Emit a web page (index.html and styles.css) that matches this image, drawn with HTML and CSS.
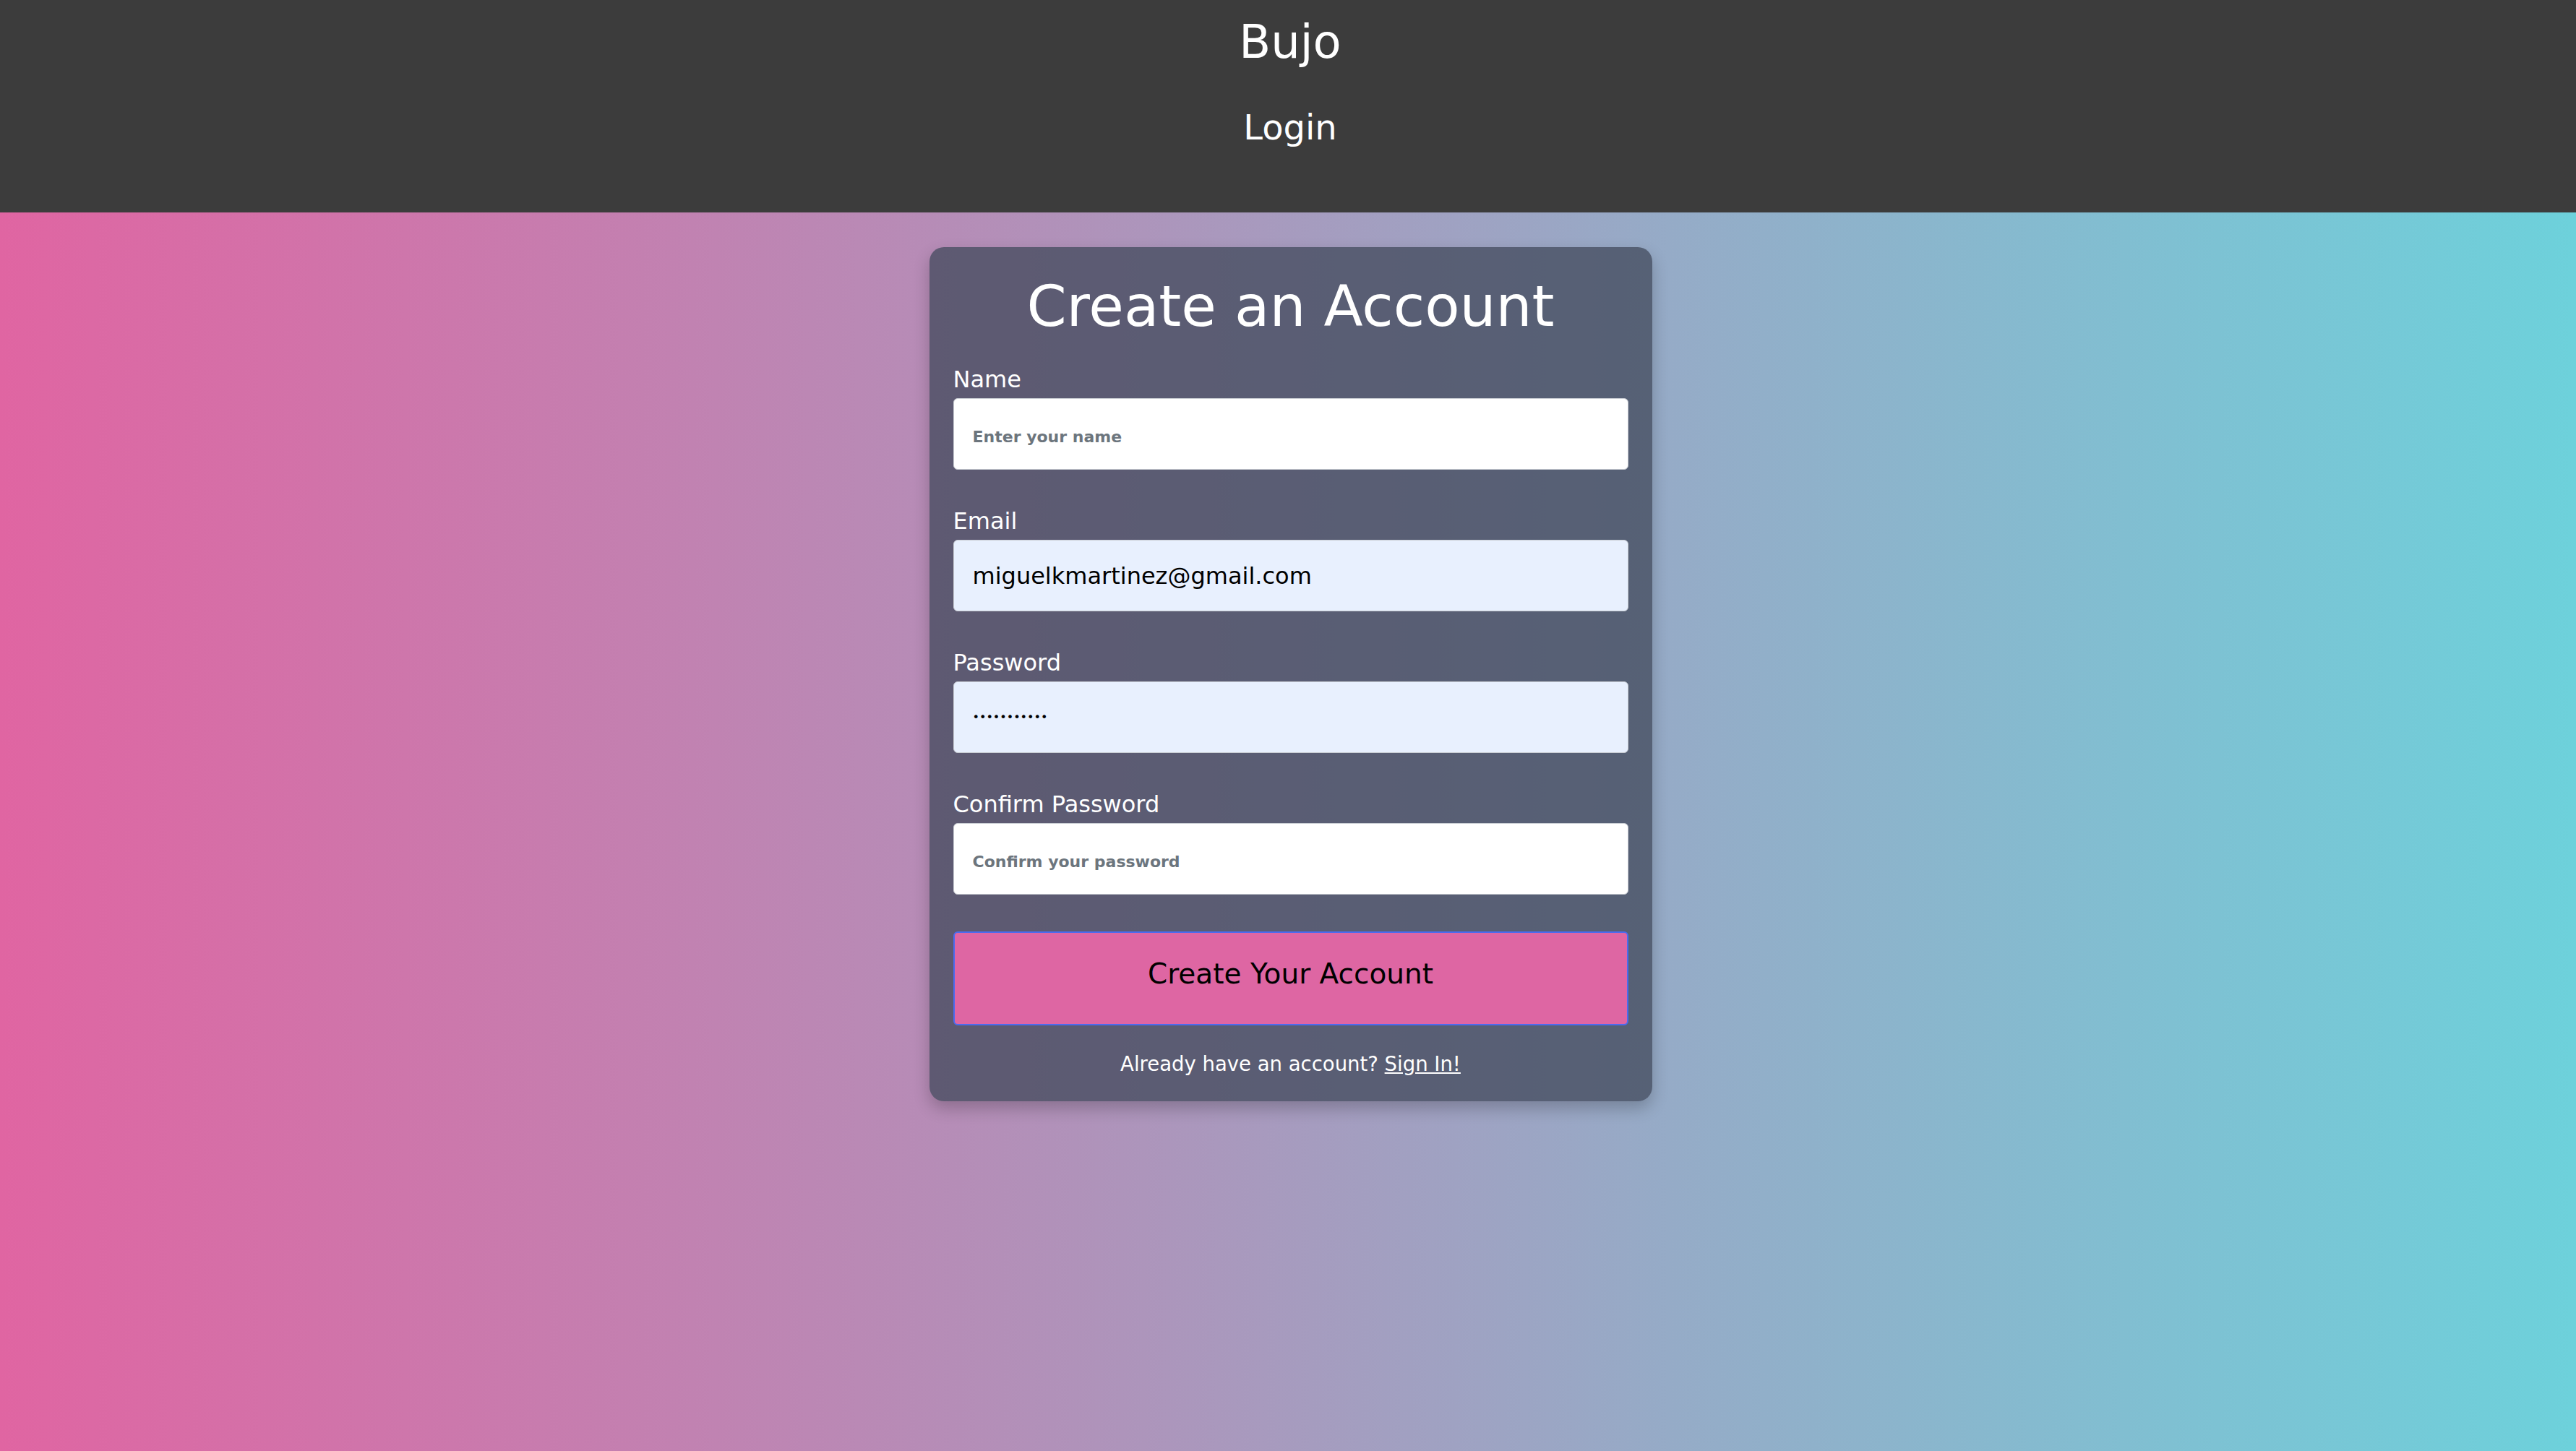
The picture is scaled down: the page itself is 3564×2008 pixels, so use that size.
FILE: index.html
```html
<!DOCTYPE html>
<html lang="en">
<head>
<meta charset="utf-8">
<title>Bujo - Create an Account</title>
<link rel="stylesheet" href="styles.css">
</head>
<body>
<header class="topbar">
  <h1 class="brand">Bujo</h1>
  <a class="nav-link" href="#">Login</a>
</header>
<main class="page">
  <section class="card">
    <h2 class="card-title">Create an Account</h2>
    <form class="form">
      <div class="group">
        <label class="label" for="name">Name</label>
        <input class="field" id="name" type="text" placeholder="Enter your name">
      </div>
      <div class="group">
        <label class="label" for="email">Email</label>
        <input class="field field-filled" id="email" type="email" value="miguelkmartinez@gmail.com">
      </div>
      <div class="group">
        <label class="label" for="password">Password</label>
        <input class="field field-filled field-password" id="password" type="password" value="abcdefghijk">
      </div>
      <div class="group">
        <label class="label" for="confirm">Confirm Password</label>
        <input class="field" id="confirm" type="password" placeholder="Confirm your password">
      </div>
      <button class="submit" type="button">Create Your Account</button>
      <p class="footer-text">Already have an account? <a class="signin" href="#">Sign In!</a></p>
    </form>
  </section>
</main>
</body>
</html>
```

FILE: styles.css
```css
html, body {
  margin: 0;
  padding: 0;
}

body {
  min-height: 100vh;
  font-family: "DejaVu Sans", "Liberation Sans", sans-serif;
  background: linear-gradient(90deg, #e065a2 0%, #6dd1db 100%);
  color: #ffffff;
}

.topbar {
  background: #3c3c3c;
  height: 294px;
  box-sizing: border-box;
  padding-top: 18px;
  padding-left: 6px;
  display: flex;
  flex-direction: column;
  align-items: center;
}

.brand {
  margin: 0;
  font-size: 64px;
  line-height: 80px;
  font-weight: normal;
  color: #ffffff;
}

.nav-link {
  margin-top: 48px;
  font-size: 48px;
  line-height: 60px;
  color: #ffffff;
  text-decoration: none;
}

.page {
  display: flex;
  justify-content: center;
  padding-top: 48px;
  padding-left: 7px;
}

.card {
  width: 1000px;
  box-sizing: border-box;
  padding: 32px 33px 35px;
  border-radius: 20px;
  background: rgba(66, 74, 92, 0.76);
  box-shadow: 0 10px 22px rgba(0, 0, 0, 0.22);
}

.card-title {
  margin: 0 0 31px;
  text-align: center;
  font-size: 79px;
  line-height: 100px;
  font-weight: normal;
  color: #ffffff;
}

.form {
  display: flex;
  flex-direction: column;
}

.group {
  display: flex;
  flex-direction: column;
  margin-bottom: 51px;
}

.label {
  font-size: 32px;
  line-height: 40px;
  margin-bottom: 6px;
  color: #ffffff;
}

.field {
  height: 99px;
  width: 100%;
  box-sizing: border-box;
  padding: 0 26px;
  border: 1px solid #c9cdd3;
  border-radius: 6px;
  background: #ffffff;
  font-family: "DejaVu Sans", "Liberation Sans", sans-serif;
  font-size: 32px;
  color: #000000;
  outline: none;
}

.field::placeholder {
  font-size: 22px;
  font-weight: bold;
  color: #6c757d;
  opacity: 1;
}

.field-filled {
  background: #e8f0fe;
}

.field-password {
  font-size: 16px;
  letter-spacing: 0;
}

.submit {
  height: 130px;
  width: 100%;
  box-sizing: border-box;
  padding: 0 0 13px;
  border: 2px solid #4b6bef;
  border-radius: 6px;
  background: #de66a3;
  color: #000000;
  font-family: "DejaVu Sans", "Liberation Sans", sans-serif;
  font-size: 39px;
  cursor: pointer;
}

.footer-text {
  margin: 36px 0 0;
  text-align: center;
  font-size: 27.5px;
  line-height: 34px;
  color: #ffffff;
}

.signin {
  color: #ffffff;
  text-decoration: underline;
}
```
